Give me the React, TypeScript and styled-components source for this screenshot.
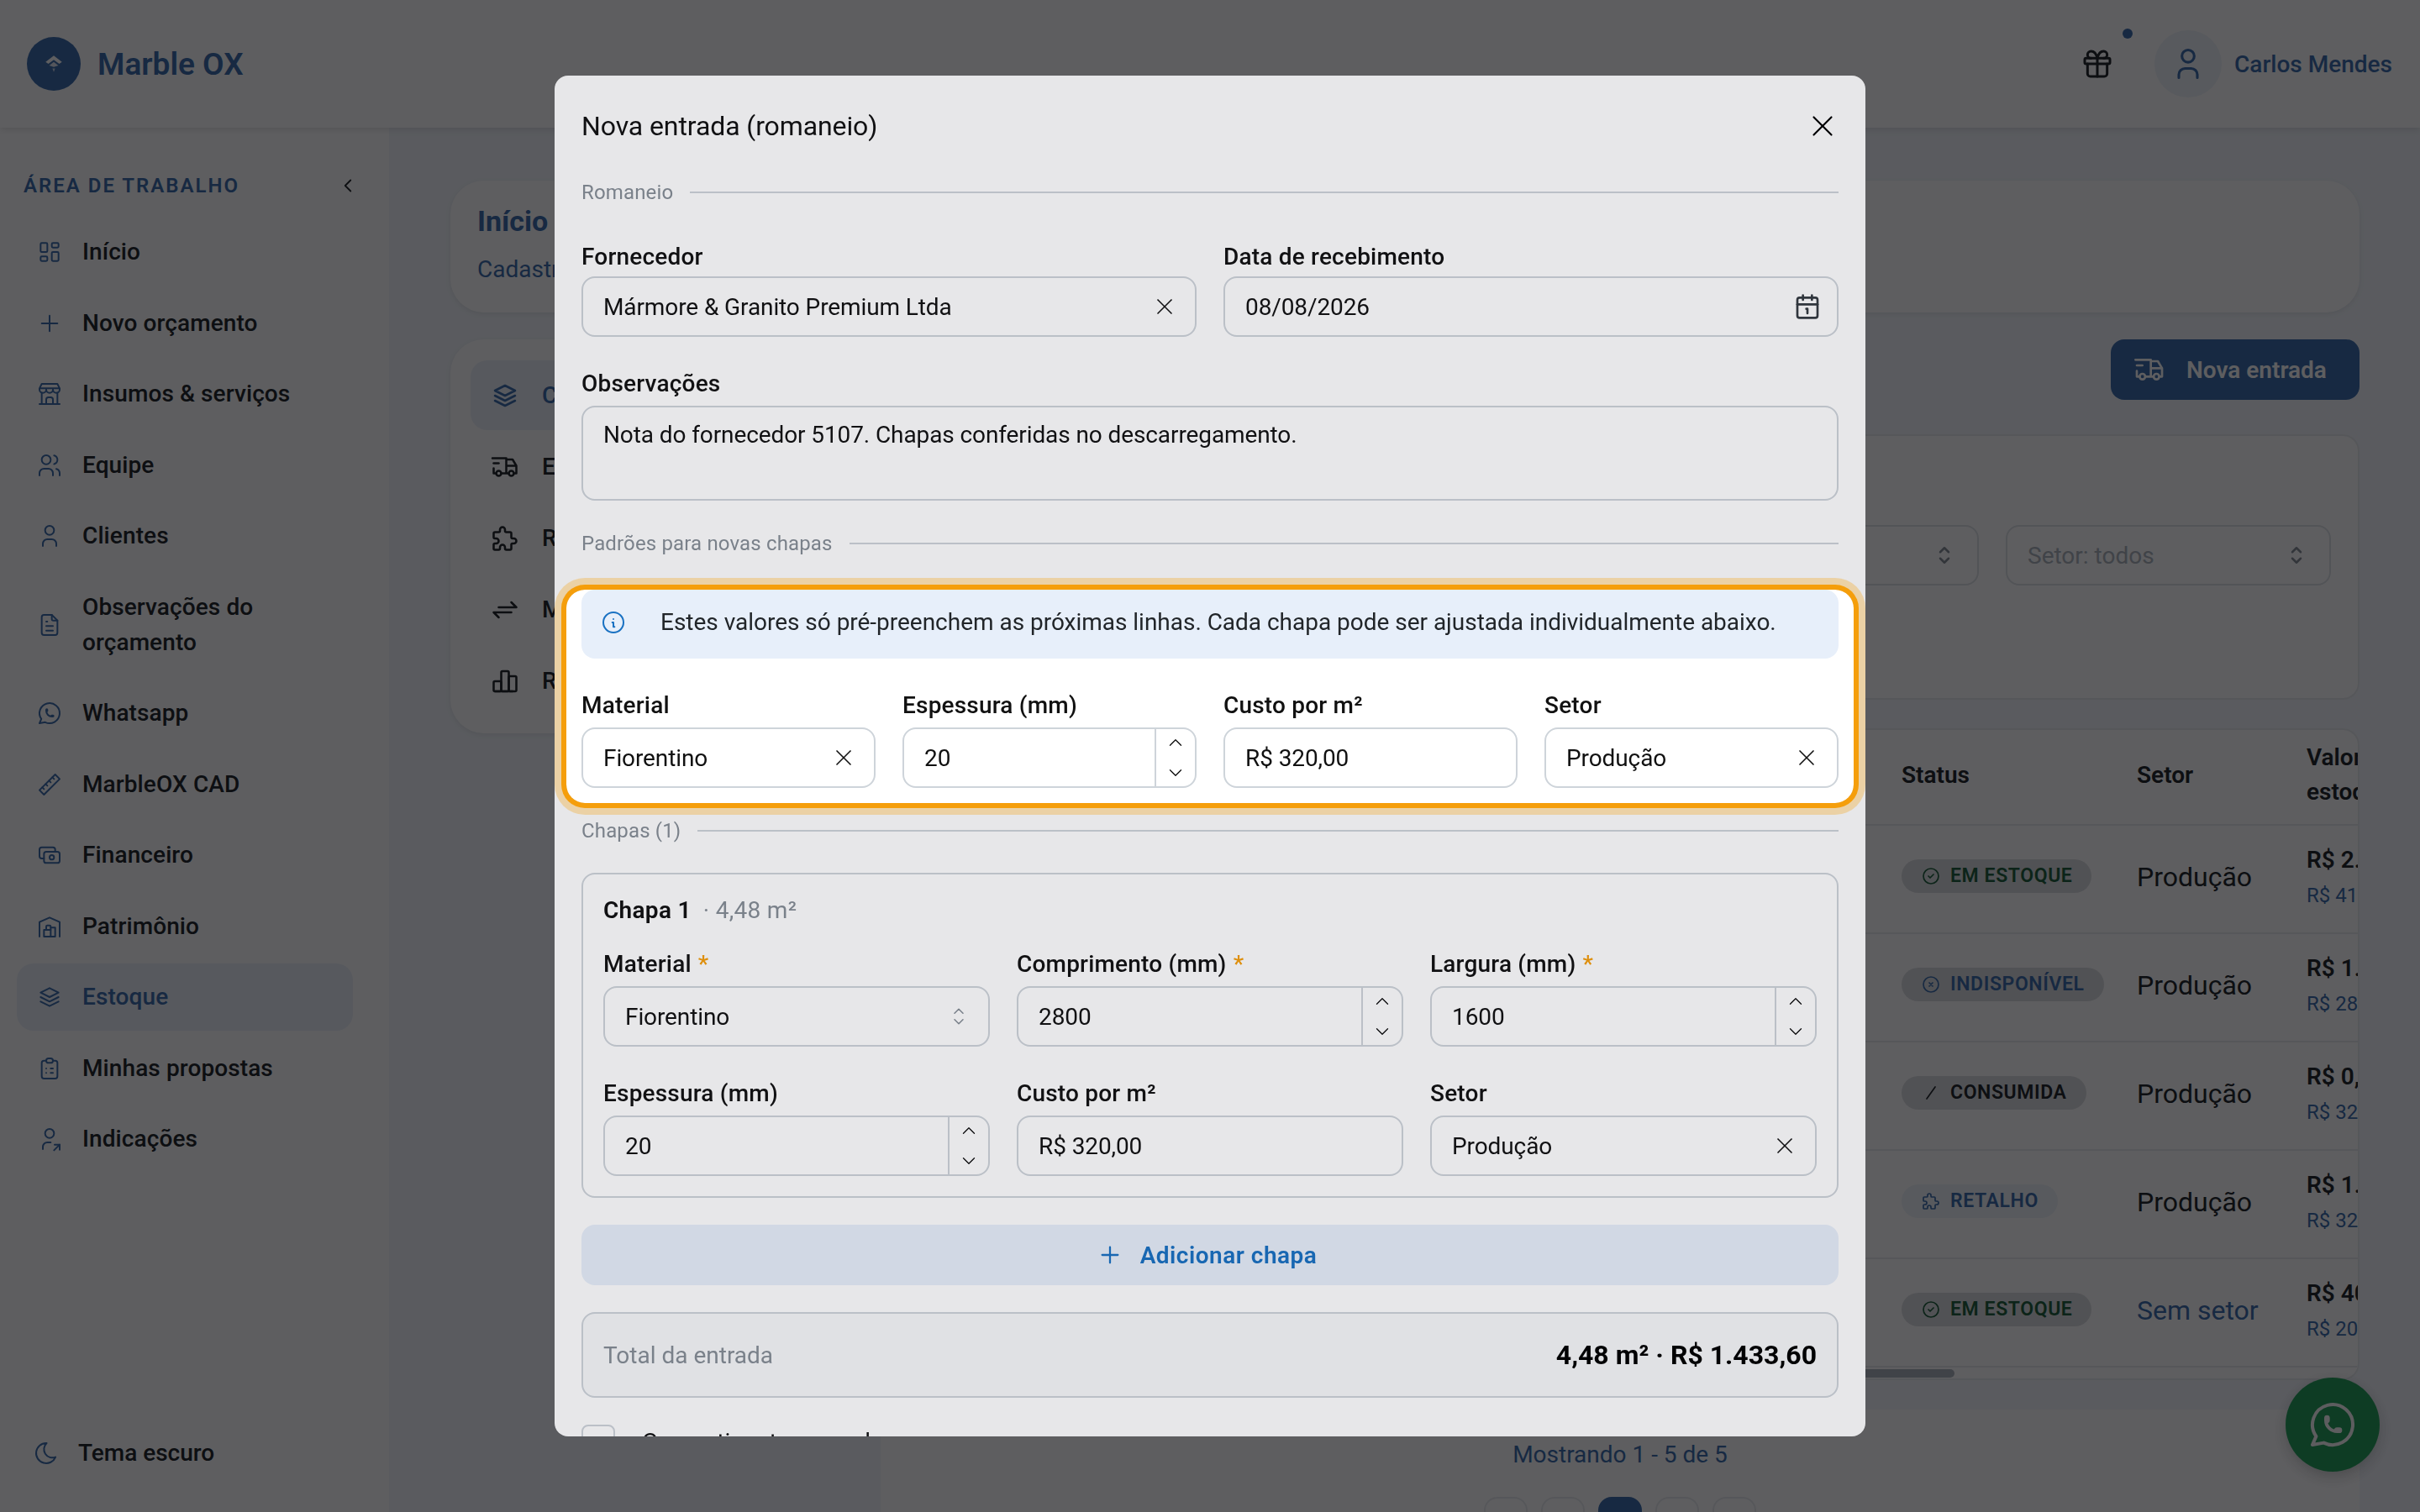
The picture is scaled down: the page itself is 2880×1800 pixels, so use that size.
import React from 'react';
import styled, { createGlobalStyle } from 'styled-components';
import {
  TbArrowsExchange,
  TbBrandWhatsapp,
  TbBuildingStore,
  TbBuildingWarehouse,
  TbCash,
  TbChartBar,
  TbChevronDown,
  TbChevronLeft,
  TbChevronUp,
  TbCircleCheck,
  TbCircleX,
  TbClipboardList,
  TbFileText,
  TbGift,
  TbInfoCircle,
  TbLayoutDashboard,
  TbMoon,
  TbPlus,
  TbPuzzle,
  TbRuler2,
  TbSelector,
  TbSlash,
  TbStack2,
  TbTruckDelivery,
  TbUser,
  TbUsers,
  TbUserShare,
  TbX,
} from 'react-icons/tb';
import { Calendar1 } from 'lucide-react';

const GlobalStyle = createGlobalStyle`
  html, body {
    margin: 0;
    padding: 0;
    background: #fff;
  }
  body {
    font-family: Roboto, "Noto Sans", sans-serif;
    color: #212529;
  }
  * {
    box-sizing: border-box;
  }
`;

const primary = '#3c6eac';

// Page behind the modal
const Page = styled.div`
  width: 2880px;
  height: 1800px;
  overflow: hidden;
  display: flex;
  flex-direction: column;
  background: #f3f7fb;
  isolation: isolate;
`;

const TopBar = styled.header`
  position: relative;
  z-index: 1;
  height: 152px;
  flex: none;
  display: flex;
  align-items: center;
  padding: 0 32px;
  background: #fff;
  box-shadow: 0 2px 8px rgba(0, 0, 0, 0.12);
`;

const Logo = styled.div`
  width: 64px;
  height: 64px;
  border-radius: 50%;
  background: ${primary};
  display: flex;
  align-items: center;
  justify-content: center;
  color: #fff;
`;

const BrandName = styled.span`
  margin-left: 20px;
  font-size: 37px;
  font-weight: 600;
  color: ${primary};
`;

const TopActions = styled.div`
  margin-left: auto;
  display: flex;
  align-items: center;
  padding-right: 1px;
`;

const GiftButton = styled.div`
  position: relative;
  width: 40px;
  height: 40px;
  display: flex;
  align-items: center;
  justify-content: center;
  margin-right: 48px;
`;

const GiftDot = styled.span`
  position: absolute;
  top: -22px;
  right: -22px;
  width: 12px;
  height: 12px;
  border-radius: 50%;
  background: ${primary};
`;

const Avatar = styled.div`
  width: 80px;
  height: 80px;
  border-radius: 50%;
  background: #eef3f8;
  color: ${primary};
  display: flex;
  align-items: center;
  justify-content: center;
  margin-right: 15px;
`;

const UserName = styled.span`
  font-size: 28px;
  font-weight: 500;
  color: ${primary};
`;

const Body = styled.div`
  flex: 1;
  display: flex;
  min-height: 0;
`;

const Sidebar = styled.aside`
  width: 463px;
  flex: none;
  background: #fff;
  display: flex;
  flex-direction: column;
  padding: 50px 0 54px 20px;
`;

const SideTitle = styled.div`
  display: flex;
  align-items: center;
  justify-content: space-between;
  padding: 0 36px 0 8px;
  height: 38px;
  font-size: 24px;
  font-weight: 600;
  letter-spacing: 2px;
  color: ${primary};
  text-transform: uppercase;
  svg {
    color: #212529;
  }
`;

const NavList = styled.nav`
  display: flex;
  flex-direction: column;
  gap: 4.5px;
  margin-top: 20px;
  width: 400px;
`;

const NavItem = styled.div<{ $active?: boolean }>`
  display: flex;
  align-items: center;
  gap: 21px;
  padding: 19px 21px;
  border-radius: 20px;
  font-size: 28px;
  line-height: 42px;
  font-weight: 500;
  letter-spacing: 0.1px;
  background: ${(p) => (p.$active ? '#ebf1f9' : 'transparent')};
  color: ${(p) => (p.$active ? primary : '#212529')};
  svg {
    flex: none;
    width: 36px;
    color: ${primary};
    stroke-width: 1.5;
  }
`;

const ThemeToggle = styled.div`
  margin-top: auto;
  display: flex;
  align-items: center;
  gap: 22px;
  padding-left: 19px;
  font-size: 28px;
  font-weight: 500;
  svg {
    color: ${primary};
    stroke-width: 1.5;
  }
`;

const Main = styled.main`
  flex: 1;
  padding: 63px 72px 0 73px;
  display: flex;
  flex-direction: column;
  gap: 32px;
  min-width: 0;
  > * {
    flex: none;
  }
`;

const Card = styled.section`
  background: #fff;
  border-radius: 40px;
  box-shadow: 0 2px 6px rgba(0, 0, 0, 0.08);
`;

const Hero = styled(Card)`
  height: 157px;
  padding: 26px 32px;
`;

const HeroTitle = styled.h1`
  margin: 0;
  font-size: 34px;
  line-height: 44px;
  font-weight: 700;
  color: ${primary};
`;

const HeroText = styled.p`
  margin: 16px 0 0;
  font-size: 28px;
  line-height: 40px;
  color: ${primary};
`;

const Columns = styled.div`
  display: grid;
  grid-template-columns: 480px 1fr;
  gap: 32px;
  align-items: start;
`;

const TabsCard = styled(Card)`
  height: 469px;
  padding: 25px 24px;
`;

const TabItem = styled.div<{ $active?: boolean }>`
  height: 83px;
  margin-bottom: 2px;
  display: flex;
  align-items: center;
  gap: 26px;
  padding-left: 23px;
  border-radius: 20px;
  font-size: 28px;
  font-weight: 500;
  background: ${(p) => (p.$active ? '#ebf1f9' : 'transparent')};
  color: ${(p) => (p.$active ? primary : '#212529')};
  svg {
    flex: none;
    stroke-width: 1.7;
  }
`;

const ContentColumn = styled.div`
  display: flex;
  flex-direction: column;
  min-width: 0;
`;

const Toolbar = styled.div`
  display: flex;
  justify-content: flex-end;
`;

const PrimaryButton = styled.div`
  width: 296px;
  height: 72px;
  border-radius: 16px;
  background: ${primary};
  color: #fff;
  display: flex;
  align-items: center;
  gap: 24px;
  padding-left: 26px;
  font-size: 28px;
  font-weight: 600;
  svg {
    stroke-width: 1.6;
  }
`;

const FilterCard = styled.div`
  margin-top: 41px;
  height: 316px;
  border: 2px solid #e9ecef;
  border-radius: 20px;
  background: #fff;
  padding: 106px 32px 0;
  display: flex;
  justify-content: flex-end;
  gap: 32px;
`;

const FilterSelect = styled.div`
  width: 387px;
  height: 72px;
  border: 2px solid #dee2e6;
  border-radius: 16px;
  padding: 0 24px;
  display: flex;
  align-items: center;
  justify-content: space-between;
  font-size: 28px;
  color: #adb5bd;
  svg {
    color: #868e96;
  }
`;

const TableCard = styled.div`
  position: relative;
  margin-top: 34px;
  height: 776px;
  border: 2px solid #e9ecef;
  border-radius: 20px;
  background: #fff;
  overflow: hidden;
`;

const TableRow = styled.div<{ $head?: boolean }>`
  display: grid;
  grid-template-columns: 1213px 280px 202px 220px;
  height: ${(p) => (p.$head ? '114px' : '129px')};
  padding-bottom: 6px;
  align-items: center;
  border-bottom: 2px solid #e9ecef;
  white-space: nowrap;
  font-weight: ${(p) => (p.$head ? 600 : 400)};
  font-size: ${(p) => (p.$head ? '28px' : '32px')};
  line-height: ${(p) => (p.$head ? '41px' : '42px')};
`;

const SectorCell = styled.span<{ $muted?: boolean }>`
  color: ${(p) => (p.$muted ? primary : '#212529')};
`;

const Badge = styled.span<{ $color: string; $bg: string }>`
  display: inline-flex;
  align-items: center;
  height: 40px;
  padding: 0 23px;
  gap: 11px;
  border-radius: 20px;
  font-size: 23px;
  font-weight: 600;
  letter-spacing: 0.6px;
  color: ${(p) => p.$color};
  background: ${(p) => p.$bg};
  svg {
    stroke-width: 1.7;
  }
`;

const ValueMain = styled.div`
  font-size: 28px;
  line-height: 40px;
  font-weight: 600;
`;

const ValueSub = styled.div`
  font-size: 24px;
  line-height: 36px;
  margin-top: 4px;
  color: ${primary};
`;

const ScrollThumb = styled.div`
  position: absolute;
  left: 1040px;
  bottom: 1px;
  width: 236px;
  height: 10px;
  border-radius: 5px;
  background: #adb5bd;
`;

const FooterCard = styled.div`
  margin-top: 35px;
  height: 200px;
  background: #fff;
  padding-top: 35px;
  display: flex;
  flex-direction: column;
  align-items: center;
  gap: 31px;
  font-size: 28px;
  line-height: 38px;
  color: ${primary};
`;

const Pager = styled.div`
  display: flex;
  gap: 16px;
`;

const PageButton = styled.div<{ $active?: boolean }>`
  width: 52px;
  height: 52px;
  border-radius: 16px;
  border: 2px solid ${(p) => (p.$active ? primary : '#e9ecef')};
  background: ${(p) => (p.$active ? primary : '#fff')};
`;

const Fab = styled.div`
  position: fixed;
  left: 2720px;
  top: 1640px;
  width: 112px;
  height: 112px;
  border-radius: 50%;
  background: #25a35a;
  color: #fff;
  display: flex;
  align-items: center;
  justify-content: center;
  box-shadow: 0 6px 18px rgba(0, 0, 0, 0.2);
  svg {
    stroke-width: 1.5;
  }
`;

// Modal layers
const Backdrop = styled.div`
  position: fixed;
  inset: 0;
  background: rgba(0, 0, 0, 0.6);
`;

const Modal = styled.div`
  position: fixed;
  left: 660px;
  top: 90px;
  width: 1560px;
  height: 1620px;
  border-radius: 16px;
  background: #fff;
  overflow: hidden;
  color: #000;
`;

const ModalHeader = styled.div`
  height: 120px;
  padding: 0 32px;
  display: flex;
  align-items: center;
  justify-content: space-between;
  svg {
    margin-right: -2px;
    stroke-width: 1.25;
  }
`;

const ModalTitle = styled.h2`
  margin: 0;
  font-size: 32px;
  font-weight: 400;
  letter-spacing: -0.1px;
  color: #111;
`;

const ModalBody = styled.div`
  padding: 0 32px;
  display: flex;
  flex-direction: column;
  gap: 32px;
`;

const SectionDivider = styled.div<{ $tight?: boolean }>`
  display: flex;
  align-items: center;
  gap: 20px;
  height: 37px;
  margin-bottom: ${(p) => (p.$tight ? '0' : '5px')};
  font-size: 24px;
  letter-spacing: 0.15px;
  color: #868e96;
  &::after {
    content: '';
    flex: 1;
    height: 2px;
    background: #ced4da;
  }
`;

const FormRow = styled.div<{ $cols: number }>`
  display: grid;
  grid-template-columns: repeat(${(p) => p.$cols}, 1fr);
  gap: 32px;
`;

const Field = styled.div`
  display: flex;
  flex-direction: column;
  min-width: 0;
`;

const FieldLabel = styled.label<{ $tall?: boolean }>`
  display: block;
  height: ${(p) => (p.$tall ? '50px' : '45px')};
  font-size: 28px;
  line-height: ${(p) => (p.$tall ? '48px' : '44px')};
  font-weight: 500;
  letter-spacing: 0.2px;
  color: #111;
  white-space: nowrap;
`;

const Required = styled.span`
  color: #f59e0b;
  margin-left: 8px;
`;

const InputBox = styled.div`
  height: 72px;
  border: 2px solid #ced4da;
  border-radius: 16px;
  background: #fff;
  padding-left: 24px;
  padding-right: 20px;
  display: flex;
  align-items: center;
  justify-content: space-between;
  font-size: 28px;
  letter-spacing: -0.1px;
  color: #111;
  svg {
    flex: none;
    stroke-width: 1.25;
  }
`;

const NumberBox = styled(InputBox)`
  padding-right: 0;
  overflow: hidden;
`;

const Stepper = styled.div`
  width: 48px;
  height: 100%;
  border-left: 2px solid #ced4da;
  display: flex;
  flex-direction: column;
  align-items: center;
  justify-content: space-between;
  padding: 3px 0;
`;

const TextArea = styled(InputBox)`
  height: 113px;
  align-items: flex-start;
  padding-top: 11px;
  line-height: 44px;
`;

const DateIcon = styled.span`
  display: flex;
  margin-right: -1px;
  color: #343a40;
  svg {
    stroke-width: 2;
  }
`;

const MutedIcon = styled.span`
  display: flex;
  color: #868e96;
`;

const Hint = styled.div`
  height: 82px;
  padding: 21px 22px 0;
  display: flex;
  gap: 40px;
  border-radius: 16px;
  background: #e7effa;
  font-size: 28px;
  line-height: 36px;
  letter-spacing: -0.02px;
  color: #212529;
  svg {
    flex: none;
    margin-top: 2px;
    color: #1971c2;
    stroke-width: 1.5;
  }
`;

const SheetCard = styled.div`
  height: 387px;
  border: 2px solid #ced4da;
  border-radius: 16px;
  padding: 24px 24px 0;
  display: flex;
  flex-direction: column;
  gap: 32px;
`;

const SheetTitle = styled.div`
  height: 37px;
  margin-bottom: -10px;
  font-size: 28px;
  line-height: 37px;
  font-weight: 600;
  letter-spacing: 0.3px;
  color: #111;
  span {
    margin-left: 14px;
    font-weight: 400;
    color: #868e96;
  }
`;

const AddButton = styled.div`
  height: 72px;
  border-radius: 16px;
  background: #e7effa;
  color: #1971c2;
  display: flex;
  align-items: center;
  justify-content: center;
  gap: 20px;
  padding-right: 8px;
  font-size: 28px;
  font-weight: 600;
  letter-spacing: 0.5px;
  svg {
    stroke-width: 1.7;
  }
`;

const TotalBox = styled.div`
  height: 102px;
  border: 2px solid #ced4da;
  border-radius: 16px;
  background: #f8f9fa;
  padding: 0 24px;
  display: flex;
  align-items: center;
  justify-content: space-between;
  font-size: 28px;
  color: #868e96;
  strong {
    font-size: 32px;
    font-weight: 700;
    color: #000;
  }
`;

const CheckRow = styled.div`
  display: flex;
  align-items: center;
  gap: 32px;
  font-size: 28px;
  color: #111;
`;

const CheckBox = styled.span`
  width: 40px;
  height: 40px;
  border: 2px solid #ced4da;
  border-radius: 8px;
`;

// Tour highlight, the huge shadow dims everything around the hole
const Spotlight = styled.div`
  position: fixed;
  left: 674px;
  top: 702px;
  width: 1532px;
  height: 254px;
  border-radius: 22px;
  pointer-events: none;
  box-shadow:
    0 0 0 6px #f59e0b,
    0 0 0 14px rgba(245, 158, 11, 0.3),
    0 0 0 3000px rgba(15, 23, 42, 0.1);
`;

const navItems = [
  { label: 'Início', icon: TbLayoutDashboard },
  { label: 'Novo orçamento', icon: TbPlus },
  { label: 'Insumos & serviços', icon: TbBuildingStore },
  { label: 'Equipe', icon: TbUsers },
  { label: 'Clientes', icon: TbUser },
  { label: 'Observações do orçamento', icon: TbFileText },
  { label: 'Whatsapp', icon: TbBrandWhatsapp },
  { label: 'MarbleOX CAD', icon: TbRuler2 },
  { label: 'Financeiro', icon: TbCash },
  { label: 'Patrimônio', icon: TbBuildingWarehouse },
  { label: 'Estoque', icon: TbStack2, active: true },
  { label: 'Minhas propostas', icon: TbClipboardList },
  { label: 'Indicações', icon: TbUserShare },
];

const tabs = [
  { label: 'Chapas', icon: TbStack2, active: true },
  { label: 'Entradas', icon: TbTruckDelivery },
  { label: 'Retalhos', icon: TbPuzzle },
  { label: 'Movimentações', icon: TbArrowsExchange },
  { label: 'Relatórios', icon: TbChartBar },
];

const stockRows = [
  { status: 'EM ESTOQUE', icon: TbCircleCheck, color: '#1c5e3a', bg: '#dcdee0', sector: 'Produção', value: 'R$ 2.867,20', sub: 'R$ 410,00/m²' },
  { status: 'INDISPONÍVEL', icon: TbCircleX, color: primary, bg: '#dcdee0', sector: 'Produção', value: 'R$ 1.254,40', sub: 'R$ 280,00/m²' },
  { status: 'CONSUMIDA', icon: TbSlash, color: '#212529', bg: '#dcdee0', sector: 'Produção', value: 'R$ 0,00', sub: 'R$ 320,00/m²' },
  { status: 'RETALHO', icon: TbPuzzle, color: primary, bg: '#eef3f9', sector: 'Produção', value: 'R$ 1.433,60', sub: 'R$ 320,00/m²' },
  { status: 'EM ESTOQUE', icon: TbCircleCheck, color: '#1c5e3a', bg: '#dcdee0', sector: 'Sem setor', value: 'R$ 400,00', sub: 'R$ 200,00/m²', muted: true },
];

const NumberInput: React.FC<{ value: string }> = ({ value }) => (
  <NumberBox>
    {value}
    <Stepper>
      <TbChevronUp size={26} />
      <TbChevronDown size={26} />
    </Stepper>
  </NumberBox>
);

const ClearableInput: React.FC<{ value: string }> = ({ value }) => (
  <InputBox>
    {value}
    <TbX size={32} />
  </InputBox>
);

const App: React.FC = () => {
  return (
    <>
      <GlobalStyle />
      <Page>
        <TopBar>
          <Logo>
            <svg width="26" height="26" viewBox="0 0 24 24" fill="currentColor">
              <path d="M12 3l9 7-3 2-6-4.5L6 12l-3-2z" />
              <path d="M12 10l5 3.8-5 1.7-5-1.7z" opacity="0.85" />
              <path d="M10.5 17h3l-1.5 4z" opacity="0.7" />
            </svg>
          </Logo>
          <BrandName>Marble OX</BrandName>
          <TopActions>
            <GiftButton>
              <TbGift size={42} strokeWidth={1.8} />
              <GiftDot />
            </GiftButton>
            <Avatar>
              <TbUser size={44} strokeWidth={1.7} />
            </Avatar>
            <UserName>Carlos Mendes</UserName>
          </TopActions>
        </TopBar>
        <Body>
          <Sidebar>
            <SideTitle>
              Área de trabalho
              <TbChevronLeft size={26} strokeWidth={1.7} />
            </SideTitle>
            <NavList>
              {navItems.map((item) => (
                <NavItem key={item.label} $active={item.active}>
                  <item.icon size={32} />
                  <span>{item.label}</span>
                </NavItem>
              ))}
            </NavList>
            <ThemeToggle>
              <TbMoon size={32} />
              Tema escuro
            </ThemeToggle>
          </Sidebar>
          <Main>
            <Hero>
              <HeroTitle>Início</HeroTitle>
              <HeroText>Cadastro de chapas</HeroText>
            </Hero>
            <Columns>
              <TabsCard>
                {tabs.map((tab) => (
                  <TabItem key={tab.label} $active={tab.active}>
                    <tab.icon size={36} />
                    {tab.label}
                  </TabItem>
                ))}
              </TabsCard>
              <ContentColumn>
                <Toolbar>
                  <PrimaryButton>
                    <TbTruckDelivery size={40} />
                    Nova entrada
                  </PrimaryButton>
                </Toolbar>
                <FilterCard>
                  <FilterSelect>
                    Status: todos
                    <TbSelector size={30} />
                  </FilterSelect>
                  <FilterSelect>
                    Setor: todos
                    <TbSelector size={30} />
                  </FilterSelect>
                </FilterCard>
                <TableCard>
                  <TableRow $head>
                    <span />
                    <span>Status</span>
                    <span>Setor</span>
                    <span>
                      Valor
                      <br />
                      estoque
                    </span>
                  </TableRow>
                  {stockRows.map((row, index) => (
                    <TableRow key={index}>
                      <span />
                      <div>
                        <Badge $color={row.color} $bg={row.bg}>
                          <row.icon size={24} />
                          {row.status}
                        </Badge>
                      </div>
                      <SectorCell $muted={row.muted}>{row.sector}</SectorCell>
                      <div>
                        <ValueMain>{row.value}</ValueMain>
                        <ValueSub>{row.sub}</ValueSub>
                      </div>
                    </TableRow>
                  ))}
                  <ScrollThumb />
                </TableCard>
                <FooterCard>
                  Mostrando 1 - 5 de 5
                  <Pager>
                    <PageButton />
                    <PageButton />
                    <PageButton $active />
                    <PageButton />
                    <PageButton />
                  </Pager>
                </FooterCard>
              </ContentColumn>
            </Columns>
          </Main>
        </Body>
        <Fab>
          <TbBrandWhatsapp size={64} />
        </Fab>
      </Page>
      <Backdrop />
      <Modal>
        <ModalHeader>
          <ModalTitle>Nova entrada (romaneio)</ModalTitle>
          <TbX size={42} />
        </ModalHeader>
        <ModalBody>
          <SectionDivider>Romaneio</SectionDivider>
          <FormRow $cols={2}>
            <Field>
              <FieldLabel>Fornecedor</FieldLabel>
              <ClearableInput value="Mármore & Granito Premium Ltda" />
            </Field>
            <Field>
              <FieldLabel>Data de recebimento</FieldLabel>
              <InputBox>
                08/08/2026
                <DateIcon>
                  <Calendar1 size={32} />
                </DateIcon>
              </InputBox>
            </Field>
          </FormRow>
          <Field>
            <FieldLabel $tall>Observações</FieldLabel>
            <TextArea>Nota do fornecedor 5107. Chapas conferidas no descarregamento.</TextArea>
          </Field>
          <SectionDivider>Padrões para novas chapas</SectionDivider>
          <Hint>
            <TbInfoCircle size={32} />
            Estes valores só pré-preenchem as próximas linhas. Cada chapa pode ser ajustada individualmente abaixo.
          </Hint>
          <FormRow $cols={4}>
            <Field>
              <FieldLabel $tall>Material</FieldLabel>
              <ClearableInput value="Fiorentino" />
            </Field>
            <Field>
              <FieldLabel $tall>Espessura (mm)</FieldLabel>
              <NumberInput value="20" />
            </Field>
            <Field>
              <FieldLabel $tall>Custo por m²</FieldLabel>
              <InputBox>R$ 320,00</InputBox>
            </Field>
            <Field>
              <FieldLabel $tall>Setor</FieldLabel>
              <ClearableInput value="Produção" />
            </Field>
          </FormRow>
          <SectionDivider $tight>Chapas (1)</SectionDivider>
          <SheetCard>
            <SheetTitle>
              Chapa 1<span>· 4,48 m²</span>
            </SheetTitle>
            <FormRow $cols={3}>
              <Field>
                <FieldLabel $tall>
                  Material<Required>*</Required>
                </FieldLabel>
                <InputBox>
                  Fiorentino
                  <MutedIcon>
                    <TbSelector size={30} />
                  </MutedIcon>
                </InputBox>
              </Field>
              <Field>
                <FieldLabel $tall>
                  Comprimento (mm)<Required>*</Required>
                </FieldLabel>
                <NumberInput value="2800" />
              </Field>
              <Field>
                <FieldLabel $tall>
                  Largura (mm)<Required>*</Required>
                </FieldLabel>
                <NumberInput value="1600" />
              </Field>
            </FormRow>
            <FormRow $cols={3}>
              <Field>
                <FieldLabel $tall>Espessura (mm)</FieldLabel>
                <NumberInput value="20" />
              </Field>
              <Field>
                <FieldLabel $tall>Custo por m²</FieldLabel>
                <InputBox>R$ 320,00</InputBox>
              </Field>
              <Field>
                <FieldLabel $tall>Setor</FieldLabel>
                <ClearableInput value="Produção" />
              </Field>
            </FormRow>
          </SheetCard>
          <AddButton>
            <TbPlus size={32} />
            Adicionar chapa
          </AddButton>
          <TotalBox>
            Total da entrada
            <strong>4,48 m² · R$ 1.433,60</strong>
          </TotalBox>
          <CheckRow>
            <CheckBox />
            Gerar etiquetas ao salvar
          </CheckRow>
        </ModalBody>
      </Modal>
      <Spotlight />
    </>
  );
};

export default App;
